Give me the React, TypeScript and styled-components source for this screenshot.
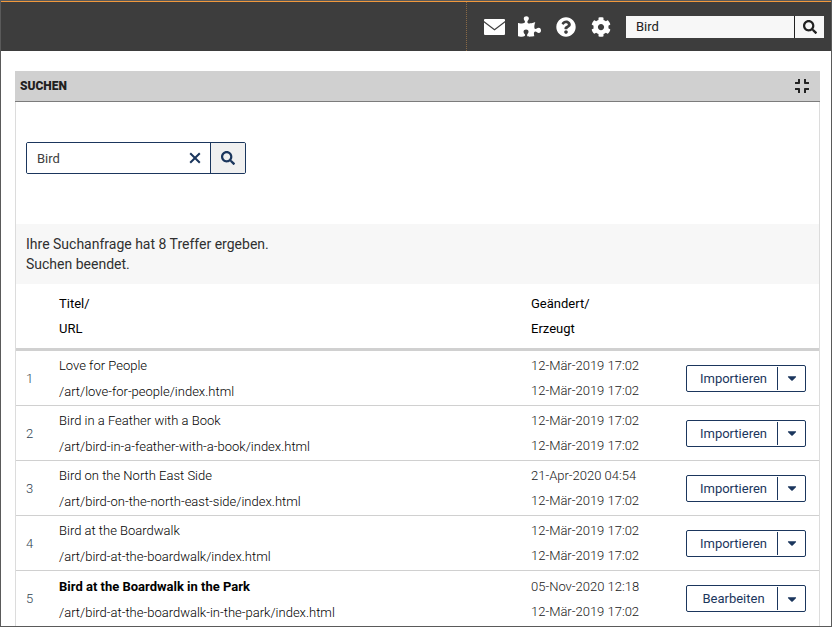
import React from "react";
import styled, { createGlobalStyle } from "styled-components";
import {
  FaCaretDown,
  FaCog,
  FaCompress,
  FaPuzzlePiece,
  FaQuestionCircle,
  FaSearch,
} from "react-icons/fa";

const navy = "#1b365d";

const GlobalStyle = createGlobalStyle`
  *, *::before, *::after { box-sizing: border-box; }
  body {
    margin: 0;
    background: #fff;
    color: #212121;
    font-family: Roboto, "Liberation Sans", sans-serif;
    font-size: 13px;
    line-height: 20px;
  }
  button, input { font: inherit; margin: 0; border-radius: 0; }
  button { cursor: pointer; }
`;

const Frame = styled.div`
  height: 100vh;
  overflow: hidden;
  border: 1px solid #5a5a5a;
`;

const TopBar = styled.header`
  display: flex;
  justify-content: flex-end;
  height: 50px;
  border-top: 1px solid #f0983c;
  background: #3d3d3d;
`;

const Tools = styled.div`
  display: flex;
  align-items: center;
  padding: 0 7px 0 17px;
  border-left: 1px dotted #8a6a45;
`;

const ToolButton = styled.button<{ $gap: number }>`
  display: flex;
  padding: 0;
  margin-right: ${(p) => p.$gap}px;
  border: 0;
  background: none;
  color: #fff;
`;

const QuickSearch = styled.form`
  display: flex;
  height: 22px;
`;

const QuickInput = styled.input`
  width: 168px;
  padding: 0 10px;
  border: 0;
  background: #f7f7f7;
  color: #212121;
  outline: 0;
`;

const QuickButton = styled.button`
  display: grid;
  place-items: center;
  width: 30px;
  padding: 0;
  border: 0;
  border-left: 1px solid #212121;
  background: #f7f7f7;
  color: #212121;
`;

const Panel = styled.main`
  margin: 20px 11px 0 14px;
  border: 1px solid #dcdcdc;
  border-top: 0;
`;

const PanelHead = styled.div`
  display: flex;
  align-items: center;
  justify-content: space-between;
  height: 31px;
  margin: 0 -1px;
  padding: 0 10px 0 5px;
  border-bottom: 1px solid #7c7c7c;
  background: #d0d0d0;
`;

const PanelTitle = styled.h1`
  margin: 0;
  font-size: 12px;
  font-weight: 900;
  text-transform: uppercase;
`;

const CollapseButton = styled.button`
  display: flex;
  padding: 0;
  border: 0;
  background: none;
  color: #212121;
`;

const SearchArea = styled.form`
  display: flex;
  padding: 40px 10px 50px;
`;

const SearchField = styled.div`
  display: flex;
  width: 220px;
  height: 32px;
  border: 1px solid ${navy};
  border-radius: 2px;
  overflow: hidden;
`;

const SearchInput = styled.input`
  flex: 1;
  min-width: 0;
  padding: 2px 10px 0;
  border: 0;
  background: #fff;
  color: #404040;
  outline: 0;
`;

const FieldButton = styled.button<{ $submit?: boolean }>`
  display: grid;
  place-items: center;
  width: ${(p) => (p.$submit ? 35 : 31)}px;
  padding: 0;
  border: 0;
  border-left: ${(p) => (p.$submit ? `1px solid ${navy}` : "0")};
  background: ${(p) => (p.$submit ? "#f0f0f0" : "#fff")};
  color: ${navy};
`;

const Summary = styled.p`
  margin: 0;
  padding: 10px;
  background: #f7f7f7;
  color: #303030;
  font-size: 14px;
`;

const Results = styled.table`
  width: 100%;
  border-collapse: separate;
  border-spacing: 0;
  table-layout: fixed;
`;

const Col = styled.col<{ $width?: number }>`
  width: ${(p) => (p.$width ? `${p.$width}px` : "auto")};
`;

const HeadCell = styled.th`
  height: 67px;
  padding: 7px 0;
  border-bottom: 3px solid #d0d0d0;
  color: #000;
  font-weight: 400;
  line-height: 25px;
  text-align: left;
  vertical-align: top;
`;

const Row = styled.tr<{ $strong?: boolean }>`
  height: ${(p) => (p.$strong ? 56 : 55)}px;
`;

const Cell = styled.td`
  padding: 0;
  border-bottom: 1px solid #d0d0d0;
  font-weight: 300;
  line-height: 25px;
`;

const NumberCell = styled(Cell)`
  padding-left: 10px;
  color: #303f50;
`;

const TitleCell = styled(Cell)`
  padding-top: 2px;
  color: #000;
`;

const DateCell = styled(Cell)`
  color: #202020;
`;

const Line = styled.div<{ $strong?: boolean }>`
  font-weight: ${(p) => (p.$strong ? 700 : 300)};
  white-space: nowrap;
`;

const UrlLine = styled(Line)`
  line-height: 27px;
`;

const SplitButton = styled.div`
  display: flex;
  align-items: center;
  width: 120px;
  height: 27px;
  border: 1px solid ${navy};
  border-radius: 2px;
  background: #fff;
`;

const ActionButton = styled.button`
  flex: 1;
  padding: 0 0 0 3px;
  border: 0;
  background: none;
  color: ${navy};
  font-weight: 400;
`;

const MenuButton = styled.button`
  display: grid;
  place-items: center;
  width: 28px;
  height: 23px;
  padding: 0;
  border: 0;
  border-left: 1px solid ${navy};
  background: none;
  color: ${navy};
`;

const EnvelopeIcon = () => (
  <svg width="21" height="16" viewBox="0 0 21 16" aria-hidden="true">
    <path d="M1 0h19q1 0 1 1v1l-10.500 8L0 2V1q0-1 1-1z" fill="#fff" />
    <path d="M0 3.400l10.500 8L21 3.400V15q0 1-1 1H1q-1 0-1-1z" fill="#fff" />
  </svg>
);

const ClearIcon = () => (
  <svg width="12" height="12" viewBox="0 0 12 12" aria-hidden="true">
    <path d="M1.200 1.200l9.600 9.600M10.800 1.200l-9.600 9.600" stroke={navy} strokeWidth="2" />
  </svg>
);

type Result = {
  title: string;
  url: string;
  changed: string;
  created: string;
  action: string;
  strong?: boolean;
};

const march = "12-Mär-2019 17:02";

const results: Result[] = [
  { title: "Love for People", url: "/art/love-for-people/index.html", changed: march, created: march, action: "Importieren" },
  { title: "Bird in a Feather with a Book", url: "/art/bird-in-a-feather-with-a-book/index.html", changed: march, created: march, action: "Importieren" },
  { title: "Bird on the North East Side", url: "/art/bird-on-the-north-east-side/index.html", changed: "21-Apr-2020 04:54", created: march, action: "Importieren" },
  { title: "Bird at the Boardwalk", url: "/art/bird-at-the-boardwalk/index.html", changed: march, created: march, action: "Importieren" },
  { title: "Bird at the Boardwalk in the Park", url: "/art/bird-at-the-boardwalk-in-the-park/index.html", changed: "05-Nov-2020 12:18", created: march, action: "Bearbeiten", strong: true },
];

const stop = (e: React.FormEvent) => e.preventDefault();

export default function App() {
  const [query, setQuery] = React.useState("Bird");

  return (
    <>
      <GlobalStyle />
      <Frame>
        <TopBar>
          <Tools>
            <ToolButton $gap={13} aria-label="Nachrichten"><EnvelopeIcon /></ToolButton>
            <ToolButton $gap={15} aria-label="Erweiterungen"><FaPuzzlePiece size={23} /></ToolButton>
            <ToolButton $gap={15} aria-label="Hilfe"><FaQuestionCircle size={20} /></ToolButton>
            <ToolButton $gap={15} aria-label="Einstellungen"><FaCog size={20} /></ToolButton>
            <QuickSearch onSubmit={stop}>
              <QuickInput aria-label="Schnellsuche" defaultValue="Bird" />
              <QuickButton aria-label="Schnellsuche starten"><FaSearch size={14} /></QuickButton>
            </QuickSearch>
          </Tools>
        </TopBar>
        <Panel>
          <PanelHead>
            <PanelTitle>Suchen</PanelTitle>
            <CollapseButton aria-label="Verkleinern"><FaCompress size={16} /></CollapseButton>
          </PanelHead>
          <SearchArea onSubmit={stop}>
            <SearchField>
              <SearchInput aria-label="Suchbegriff" value={query} onChange={(e) => setQuery(e.target.value)} />
              <FieldButton type="button" aria-label="Leeren" onClick={() => setQuery("")}><ClearIcon /></FieldButton>
              <FieldButton $submit aria-label="Suchen"><FaSearch size={14} /></FieldButton>
            </SearchField>
          </SearchArea>
          <Summary>
            Ihre Suchanfrage hat 8 Treffer ergeben.
            <br />
            Suchen beendet.
          </Summary>
          <Results>
            <colgroup>
              <Col $width={43} />
              <Col />
              <Col $width={155} />
              <Col $width={133} />
            </colgroup>
            <thead>
              <tr>
                <HeadCell aria-label="Nummer" />
                <HeadCell>Titel/<br />URL</HeadCell>
                <HeadCell>Geändert/<br />Erzeugt</HeadCell>
                <HeadCell aria-label="Aktion" />
              </tr>
            </thead>
            <tbody>
              {results.map((r, i) => (
                <Row key={r.url} $strong={r.strong}>
                  <NumberCell>{i + 1}</NumberCell>
                  <TitleCell>
                    <Line $strong={r.strong}>{r.title}</Line>
                    <UrlLine>{r.url}</UrlLine>
                  </TitleCell>
                  <DateCell>
                    <Line>{r.changed}</Line>
                    <Line>{r.created}</Line>
                  </DateCell>
                  <Cell>
                    <SplitButton>
                      <ActionButton>{r.action}</ActionButton>
                      <MenuButton aria-label={`Weitere Aktionen für ${r.title}`}><FaCaretDown size={14} /></MenuButton>
                    </SplitButton>
                  </Cell>
                </Row>
              ))}
            </tbody>
          </Results>
        </Panel>
      </Frame>
    </>
  );
}
